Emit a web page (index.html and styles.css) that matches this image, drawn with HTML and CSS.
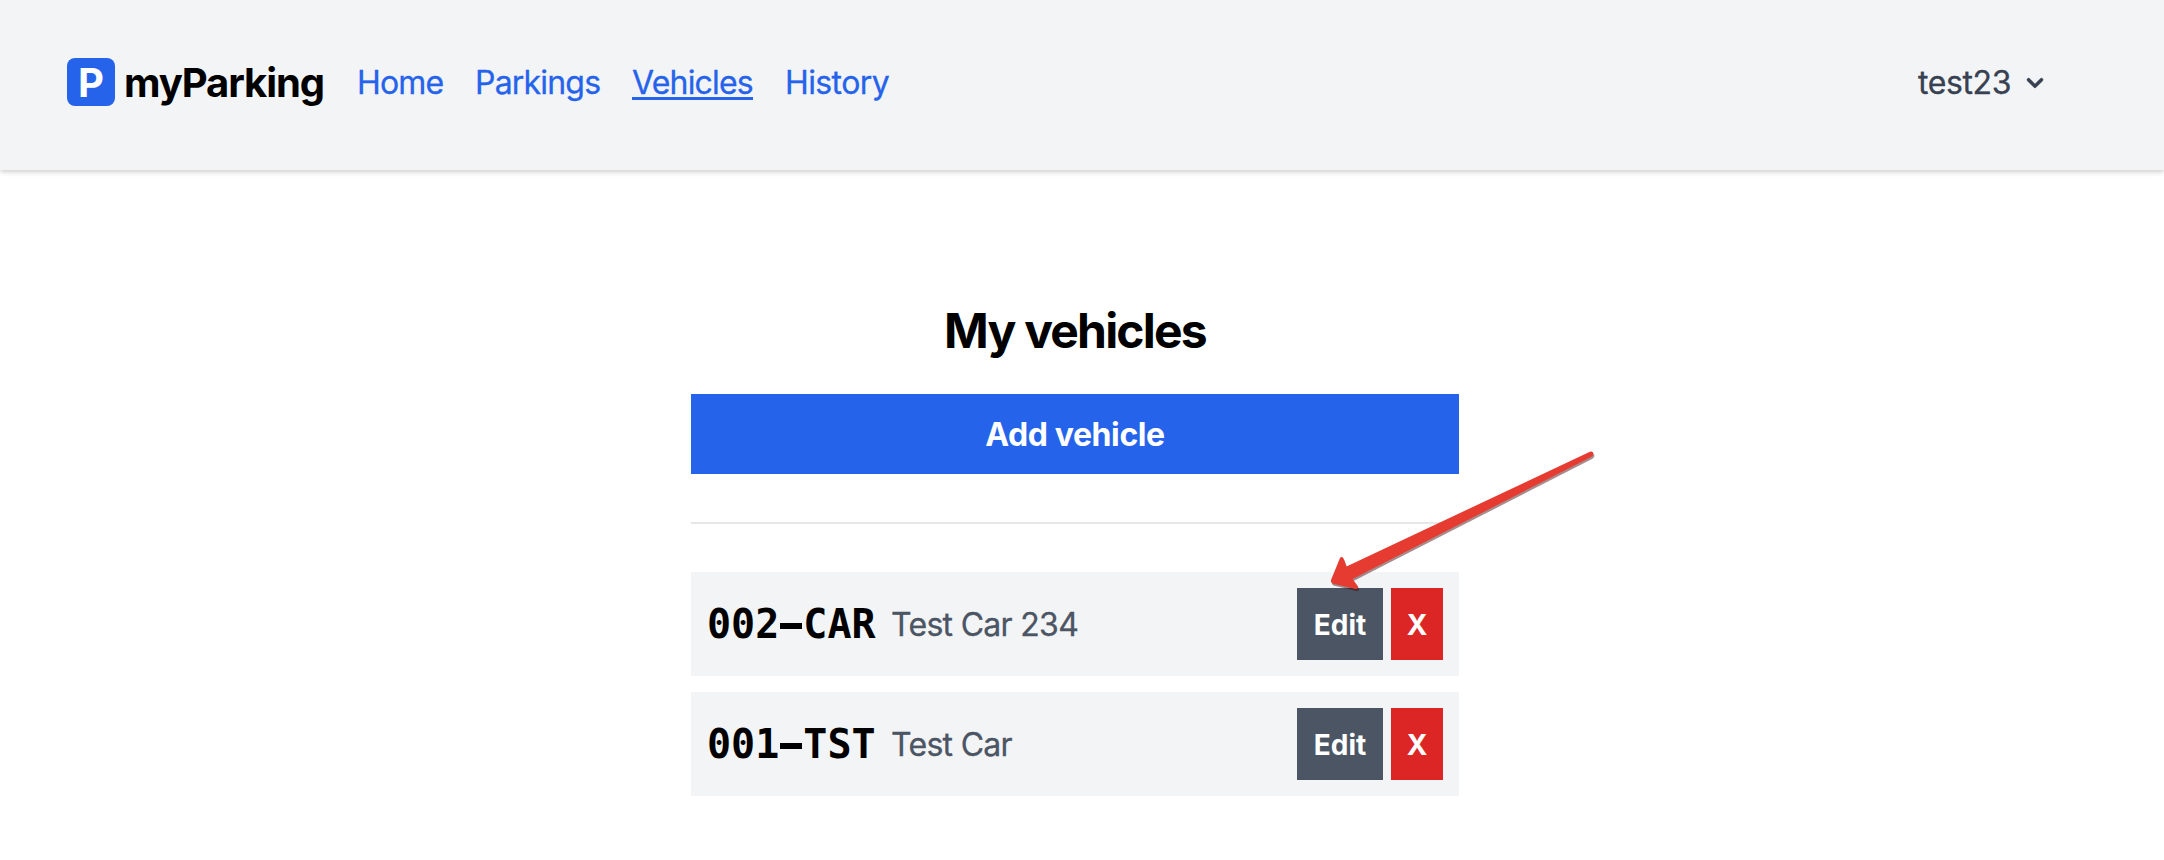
FILE: index.html
```html
<!DOCTYPE html>
<html lang="en">
<head>
<meta charset="utf-8">
<title>myParking</title>
<link rel="stylesheet" href="styles.css">
</head>
<body>
<header class="header">
  <div class="brand">
    <span class="logo">P</span>
    <span class="brand-name">myParking</span>
  </div>
  <nav class="nav">
    <a class="link home">Home</a>
    <a class="link parkings">Parkings</a>
    <a class="link vehicles">Vehicles</a>
    <a class="link history">History</a>
  </nav>
  <div class="user">
    <span class="user-name">test23</span>
    <svg class="chevron" viewBox="0 0 20 20"><path fill="currentColor" fill-rule="evenodd" d="M5.293 7.293a1 1 0 011.414 0L10 10.586l3.293-3.293a1 1 0 111.414 1.414l-4 4a1 1 0 01-1.414 0l-4-4a1 1 0 010-1.414z"/></svg>
  </div>
</header>
<main class="content">
  <h1 class="title">My vehicles</h1>
  <button class="add">Add vehicle</button>
  <div class="divider"></div>
  <div class="list">
    <div class="row">
      <span class="plate">002<span class="dash">-</span>CAR</span>
      <span class="desc">Test Car 234</span>
      <button class="btn edit">Edit</button>
      <button class="btn delete">X</button>
    </div>
    <div class="row">
      <span class="plate">001<span class="dash">-</span>TST</span>
      <span class="desc">Test Car</span>
      <button class="btn edit">Edit</button>
      <button class="btn delete">X</button>
    </div>
  </div>
</main>
<svg class="arrow" viewBox="1310 440 300 160">
  <path d="M1590.500 451.500Q1593.500 451 1593.500 454Q1593 456 1591 457L1352.500 579L1358 586.500Q1358 589.500 1355.500 589L1332.500 583.500Q1330.500 582.500 1331 580L1340 558Q1342 556 1343.500 558.500L1346.500 566.500Z"/>
</svg>
</body>
</html>
```

FILE: styles.css
```css
* { box-sizing: border-box; }

body {
  margin: 0;
  min-height: 860px;
  background: #fff;
  color: #000;
  font: 32px/48px Inter, "Liberation Sans", sans-serif;
}

.header {
  display: flex;
  align-items: flex-start;
  height: 170px;
  padding: 58px 113px 0 67px;
  background: #f3f4f6;
  box-shadow: 0 2px 6px rgba(0, 0, 0, 0.1), 0 2px 4px rgba(0, 0, 0, 0.1);
}

.brand { display: flex; gap: 9px; width: 290px; }

.logo {
  width: 48px;
  height: 48px;
  border-radius: 8px;
  background: #2563eb;
  color: #fff;
  font-size: 40px;
  font-weight: 700;
  line-height: 50px;
  text-align: center;
}

.brand-name { font-size: 40px; font-weight: 700; line-height: 50px; letter-spacing: -1.1px; }

.nav { display: flex; color: #2563eb; line-height: 50px; }
.link { white-space: nowrap; letter-spacing: -0.8px; -webkit-text-stroke: 0.3px; }
.home { width: 118px; }
.parkings { width: 157px; }
.vehicles {
  width: 121px;
  margin-right: 32px;
  text-decoration: underline;
  text-decoration-thickness: 3px;
  text-underline-offset: 3px;
  text-decoration-skip-ink: none;
}
.history { letter-spacing: -0.6px; }

.user { display: flex; align-items: center; gap: 8px; margin-left: auto; color: #374151; }
.user-name { line-height: 50px; letter-spacing: -0.4px; -webkit-text-stroke: 0.3px; }
.chevron { width: 32px; height: 32px; stroke: currentColor; stroke-width: 0.3; }

.content { width: 768px; margin: 128px 0 0 691px; }

.title {
  height: 64px;
  margin: 0 0 32px;
  font-size: 48px;
  font-weight: 700;
  line-height: 66px;
  text-align: center;
  letter-spacing: -1.8px;
}

button { border: 0; padding: 0; color: #fff; font: inherit; font-weight: 700; }

.add {
  display: block;
  width: 100%;
  height: 80px;
  padding-top: 2px;
  background: #2563eb;
  letter-spacing: -0.4px;
}

.divider { height: 2px; margin: 48px 0; background: #e5e7eb; }

.list { display: flex; flex-direction: column; gap: 16px; }

.row {
  display: flex;
  align-items: center;
  height: 104px;
  padding: 16px;
  background: #f3f4f6;
}

.plate {
  width: 184px;
  font: 700 40px/56px "DejaVu Sans Mono", monospace;
}

/* Widens the hyphen to a full-width bar within its own cell */
.dash {
  display: inline-block;
  background: linear-gradient(#000, #000) 1px 27px / 22px 6px no-repeat;
}

.desc {
  flex: 1;
  padding-top: 1px;
  color: #4b5563;
  letter-spacing: -0.7px;
  -webkit-text-stroke: 0.3px;
}

.btn { height: 72px; padding-top: 1px; font-size: 28px; }
.edit { width: 86px; margin-right: 8px; background: #4b5563; }
.delete { width: 52px; background: #dc2626; }

.arrow {
  position: absolute;
  left: 1310px;
  top: 440px;
  width: 300px;
  height: 160px;
  fill: #e53b30;
  filter: drop-shadow(1px 2px 0.5px rgba(60, 0, 0, 0.45));
}
```
